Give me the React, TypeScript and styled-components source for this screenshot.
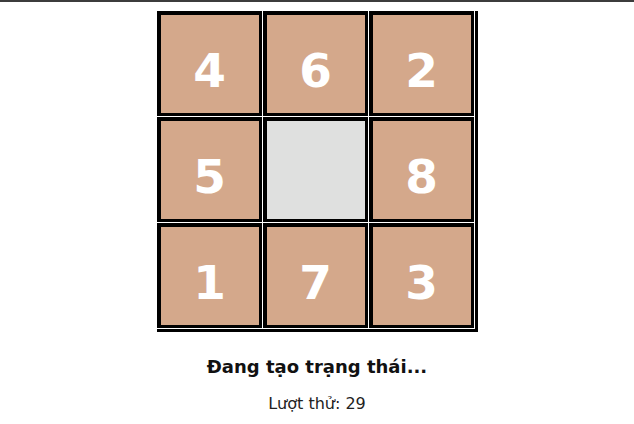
import React from "react";
import styled, { createGlobalStyle } from "styled-components";

const Global = createGlobalStyle`
  html, body { margin: 0; padding: 0; background: #fff; }
  body { border-top: 2px solid #3c3c3c; font-family: "DejaVu Sans", sans-serif; }
`;

const Page = styled.main`
  display: flex;
  flex-direction: column;
  align-items: center;
  padding-top: 9px;
`;

const Board = styled.div`
  display: grid;
  grid-template-columns: repeat(3, 105px);
  grid-auto-rows: 105px;
  gap: 1px;
  padding: 0 1px 1px 0;
  background: #fff;
  border-right: 3px solid #000;
  border-bottom: 3px solid #000;
`;

const Tile = styled.div<{ $empty?: boolean }>`
  box-sizing: border-box;
  border: solid #000;
  border-width: 4px 3px 3px 4px;
  padding-top: 12px;
  background: ${(p) => (p.$empty ? "#dfe0df" : "#d4a88b")};
  display: flex;
  align-items: center;
  justify-content: center;
  color: #fff;
  font-family: "DejaVu Sans", sans-serif;
  font-weight: 700;
  font-size: 47px;
  line-height: 1;
`;

const Status = styled.h2`
  margin: 24px 0 0;
  font-family: "DejaVu Sans", sans-serif;
  font-weight: 700;
  font-size: 18px;
  color: #111;
`;

const Moves = styled.p`
  margin: 17px 0 0;
  font-family: "DejaVu Sans", sans-serif;
  font-size: 16px;
  color: #222;
`;

const tiles = [4, 6, 2, 5, 0, 8, 1, 7, 3];

export default function App() {
  return (
    <>
      <Global />
      <Page>
        <Board>
          {tiles.map((n, i) => (
            <Tile key={i} $empty={n === 0}>
              {n === 0 ? "" : n}
            </Tile>
          ))}
        </Board>
        <Status>Đang tạo trạng thái...</Status>
        <Moves>Lượt thử: 29</Moves>
      </Page>
    </>
  );
}
